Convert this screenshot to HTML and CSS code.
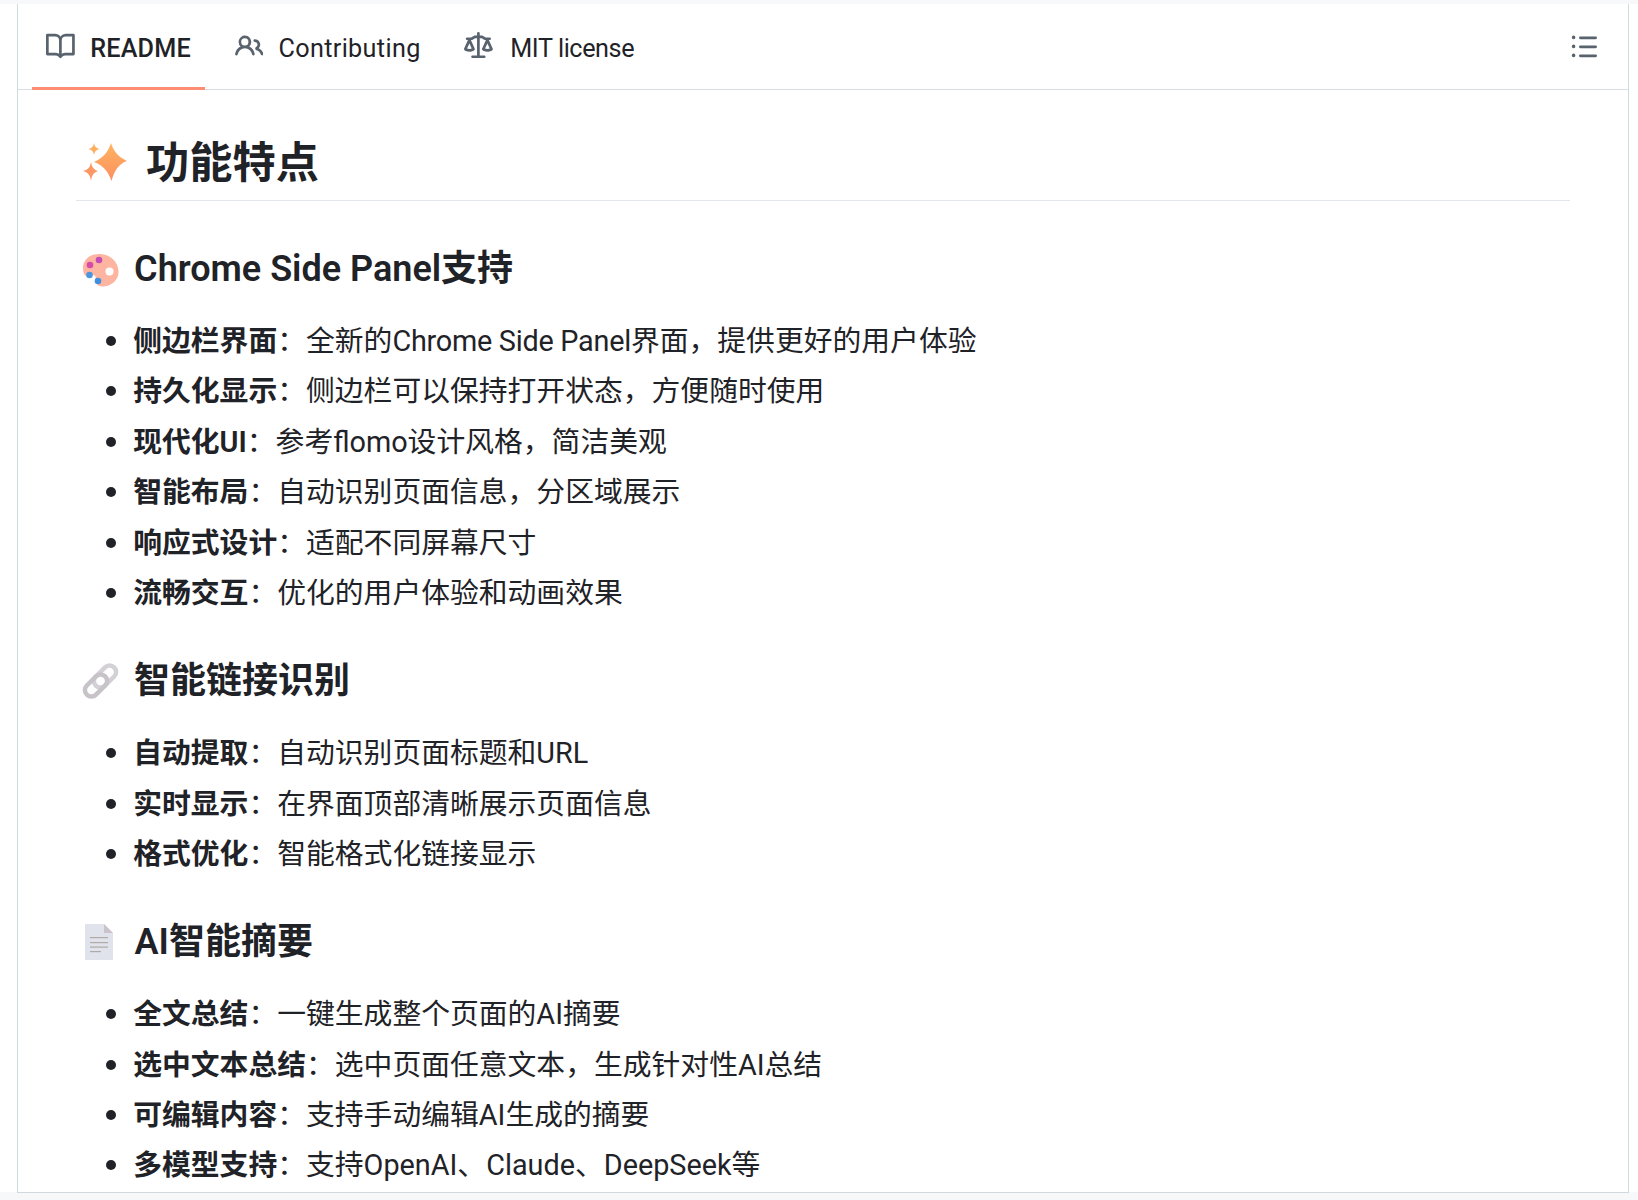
FILE: index.html
```html
<!DOCTYPE html>
<html lang="zh-CN">
<head>
<meta charset="utf-8">
<title>README</title>
<link rel="stylesheet" href="styles.css">
</head>
<body>
<div class="card">
  <header class="tabbar">
    <nav class="tabs">
      <a class="tab active"><svg class="octicon" viewBox="0 0 16 16"><path d="M0 1.75A.75.75 0 0 1 .75 1h4.253c1.227 0 2.317.59 3 1.501A3.743 3.743 0 0 1 11.006 1h4.245a.75.75 0 0 1 .75.75v10.5a.75.75 0 0 1-.75.75h-4.507a2.25 2.25 0 0 0-1.591.659l-.622.621a.75.75 0 0 1-1.06 0l-.622-.621A2.25 2.25 0 0 0 5.258 13H.75a.75.75 0 0 1-.75-.75Zm7.251 10.324.004-5.073-.002-2.253A2.25 2.25 0 0 0 5.003 2.5H1.5v9h3.757a3.75 3.75 0 0 1 1.994.574ZM8.755 4.75l-.004 7.322a3.752 3.752 0 0 1 1.992-.572H14.5v-9h-3.495a2.25 2.25 0 0 0-2.25 2.25Z"/></svg><span>README</span></a>
      <a class="tab"><svg class="octicon" viewBox="0 0 16 16"><path d="M2 5.5a3.5 3.5 0 1 1 5.898 2.549 5.508 5.508 0 0 1 3.034 4.084.75.75 0 1 1-1.482.235 4 4 0 0 0-7.9 0 .75.75 0 0 1-1.482-.236A5.507 5.507 0 0 1 3.102 8.05 3.493 3.493 0 0 1 2 5.5ZM11 4a3.001 3.001 0 0 1 2.22 5.018 5.01 5.01 0 0 1 2.56 3.012.749.749 0 0 1-.885.954.752.752 0 0 1-.549-.514 3.507 3.507 0 0 0-2.522-2.372.75.75 0 0 1-.574-.73v-.352a.75.75 0 0 1 .416-.672A1.5 1.5 0 0 0 11 5.5.75.75 0 0 1 11 4Zm-5.5-.5a2 2 0 1 0-.001 3.999A2 2 0 0 0 5.5 3.5Z"/></svg><span class="wide">Contributing</span></a>
      <a class="tab"><svg class="octicon" viewBox="0 0 16 16"><path d="M8.75.75V2h.985c.304 0 .603.08.867.231l1.29.736c.038.022.08.033.124.033h2.234a.75.75 0 0 1 0 1.5h-.427l2.111 4.692a.75.75 0 0 1-.154.838l-.53-.53.529.531-.001.002-.002.002-.006.006-.006.005-.01.01-.045.04c-.21.176-.441.327-.686.45C14.556 10.78 13.88 11 13 11a4.498 4.498 0 0 1-2.023-.454 3.544 3.544 0 0 1-.686-.45l-.045-.04-.016-.015-.006-.006-.004-.004v-.001a.75.75 0 0 1-.154-.838L12.178 4.5h-.162c-.305 0-.604-.079-.868-.231l-1.29-.736a.245.245 0 0 0-.124-.033H8.75V13h2.5a.75.75 0 0 1 0 1.5h-6.5a.75.75 0 0 1 0-1.5h2.5V3.5h-.984a.245.245 0 0 0-.124.033l-1.289.737c-.265.15-.564.23-.869.23h-.162l2.112 4.692a.75.75 0 0 1-.154.838l-.53-.53.529.531-.001.002-.002.002-.006.006-.016.015-.045.04c-.21.176-.441.327-.686.45C4.556 10.78 3.88 11 3 11a4.498 4.498 0 0 1-2.023-.454 3.544 3.544 0 0 1-.686-.45l-.045-.04-.016-.015-.006-.006-.004-.004v-.001a.75.75 0 0 1-.154-.838L2.178 4.5H1.750a.75.75 0 0 1 0-1.5h2.234a.249.249 0 0 0 .125-.033l1.288-.737c.265-.15.564-.23.869-.23h.984V.75a.75.75 0 0 1 1.5 0Zm2.945 8.477c.285.135.718.273 1.305.273s1.02-.138 1.305-.273L13 6.327Zm-10 0c.285.135.718.273 1.305.273s1.02-.138 1.305-.273L3 6.327Z"/></svg><span class="narrow">MIT license</span></a>
    </nav>
    <svg class="octicon outline" viewBox="0 0 16 16"><path d="M5.75 2.5h8.5a.75.75 0 0 1 0 1.5h-8.5a.75.75 0 0 1 0-1.5Zm0 5h8.5a.75.75 0 0 1 0 1.5h-8.5a.75.75 0 0 1 0-1.5Zm0 5h8.5a.75.75 0 0 1 0 1.5h-8.5a.75.75 0 0 1 0-1.5ZM2 14a1 1 0 1 1 0-2 1 1 0 0 1 0 2Zm1-6a1 1 0 1 1-2 0 1 1 0 0 1 2 0ZM2 4a1 1 0 1 1 0-2 1 1 0 0 1 0 2Z"/></svg>
  </header>
  <article class="markdown">
    <h1>
      <svg class="emoji emoji-sparkles" viewBox="0 0 46 40"><defs><linearGradient id="spark" x1="0" y1="0" x2="0" y2="1"><stop offset="0" stop-color="#fdb45f"/><stop offset="1" stop-color="#fd8f62"/></linearGradient></defs><path fill="url(#spark)" d="M29 1C31 8 36 15 45 19C36 22 32 30 29.500 39C26.500 30 21 23 12 20C22 16 27 8 29 1Z"/><path fill="#fdae5f" d="M12 1C12.700 4.500 14 6 17.500 7C14 8 12.700 9.500 12 13C11.300 9.500 10 8 6.500 7C10 6 11.300 4.500 12 1Z"/><path fill="#fd9763" d="M9 20C9.800 25 11.500 27.500 16 29C11.500 30.500 9.800 33.500 9 39C8.200 33.500 6.500 30.500 1 29C6.500 27.500 8.200 25 9 20Z"/></svg>
      <span>功能特点</span>
    </h1>
    <h2>
      <svg class="emoji emoji-palette" viewBox="0 0 37 35"><path fill="#fdb4a0" d="M19 1C9 0 1 6 1 15C1 19 2 22 4 23C7 24 9 22 11 22C14 22 14 25 14 28C14 32 18 34 22 33.500C30 32.500 36.500 27 36.500 19C36.500 9 29 2 19 1Z"/><circle cx="27.500" cy="18.500" r="4" fill="#fff"/><circle cx="17" cy="7" r="3.300" fill="#c44bb5"/><circle cx="8" cy="12" r="3.300" fill="#d84aa8"/><circle cx="7.500" cy="22" r="3.300" fill="#4b96dc"/><circle cx="16" cy="28" r="3.300" fill="#3f8fe0"/></svg>
      <span>Chrome Side Panel支持</span>
    </h2>
    <ul>
      <li><strong>侧边栏界面</strong>：全新的<span class="tight">Chrome Side Panel</span>界面，提供更好的用户体验</li>
      <li><strong>持久化显示</strong>：侧边栏可以保持打开状态，方便随时使用</li>
      <li><strong>现代化UI</strong>：参考flomo设计风格，简洁美观</li>
      <li><strong>智能布局</strong>：自动识别页面信息，分区域展示</li>
      <li><strong>响应式设计</strong>：适配不同屏幕尺寸</li>
      <li><strong>流畅交互</strong>：优化的用户体验和动画效果</li>
    </ul>
    <h2>
      <svg class="emoji emoji-link" viewBox="0 0 37 36"><g fill="none" stroke-width="4.500"><rect x="16.500" y="0.500" width="13" height="26" rx="6.500" transform="rotate(45 23 13.500)" stroke="#d3d0d6"/><rect x="7.500" y="9.500" width="13" height="26" rx="6.500" transform="rotate(45 14 22.500)" stroke="#c7c3c9"/></g></svg>
      <span>智能链接识别</span>
    </h2>
    <ul>
      <li><strong>自动提取</strong>：自动识别页面标题和URL</li>
      <li><strong>实时显示</strong>：在界面顶部清晰展示页面信息</li>
      <li><strong>格式优化</strong>：智能格式化链接显示</li>
    </ul>
    <h2>
      <svg class="emoji emoji-doc" viewBox="0 0 28 36"><path fill="#e1e3ec" d="M0 0H19L28 9V36H0Z"/><path fill="#cbc3cb" d="M19 0L28 9H19Z"/><g fill="#aeaaa6"><rect x="5" y="13" width="18" height="1.200"/><rect x="5" y="18" width="18" height="1.200"/><rect x="5" y="22.500" width="18" height="1.200"/><rect x="5" y="27" width="11" height="1.200"/></g></svg>
      <span>AI智能摘要</span>
    </h2>
    <ul>
      <li><strong>全文总结</strong>：一键生成整个页面的AI摘要</li>
      <li><strong>选中文本总结</strong>：选中页面任意文本，生成针对性AI总结</li>
      <li><strong>可编辑内容</strong>：支持手动编辑AI生成的摘要</li>
      <li><strong>多模型支持</strong>：支持OpenAI、Claude、DeepSeek等</li>
    </ul>
  </article>
</div>
</body>
</html>
```
FILE: styles.css
```css
html, body {
  margin: 0;
  height: 1200px;
  overflow: hidden;
}
body {
  background: linear-gradient(#f6f8fa 0 4px, #fff 4px 1192px, #f6f8fa 1192px);
  padding-top: 4px;
  box-sizing: border-box;
  font-family: Roboto, "Noto Sans CJK SC", sans-serif;
  color: #1f2328;
}
.card {
  margin-left: 17px;
  width: 1612px;
  height: 1189px;
  box-sizing: border-box;
  border: 1px solid #d1d9e0;
  border-top: 0;
  overflow: hidden;
  background: #fff;
}
.tabbar {
  display: flex;
  align-items: center;
  justify-content: space-between;
  height: 85px;
  padding: 0 29px 0 14px;
  border-bottom: 1px solid #d8dee4;
}
.tabs {
  display: flex;
  gap: 15px;
  height: 100%;
}
.tab {
  position: relative;
  display: flex;
  align-items: center;
  gap: 15px;
  padding: 0 14.4px;
  font-size: 25.2px;
  color: #1f2328;
}
.tab span {
  padding-top: 4px;
}
.wide {
  letter-spacing: 0.35px;
}
.narrow {
  margin-left: 2px;
  letter-spacing: -0.4px;
}
.tight {
  letter-spacing: -0.25px;
}
.tab.active {
  font-weight: 500;
  letter-spacing: 0.2px;
}
.tab.active::after {
  content: "";
  position: absolute;
  left: 0;
  right: 0;
  bottom: -1px;
  height: 3px;
  background: #fd8c73;
}
.octicon {
  width: 28.8px;
  height: 28.8px;
  fill: #59636e;
  flex: none;
}
.markdown {
  padding: 47px 57.6px 0;
}
h1, h2 {
  display: flex;
  align-items: center;
  margin: 0;
  font-weight: 600;
}
h1 {
  font-size: 43.2px;
  line-height: 54px;
  padding-bottom: 9px;
  border-bottom: 1.5px solid #e3e6ea;
}
h2 {
  font-size: 36px;
  line-height: 45px;
  margin-top: 44px;
  margin-bottom: 28px;
}
h1 + h2 {
  margin-top: 46px;
}
.emoji {
  flex: none;
}
.emoji-sparkles {
  width: 46px;
  height: 40px;
  margin: 0 18px 4px 6.500px;
}
.emoji-palette {
  width: 37px;
  height: 35px;
  margin: 2px 15px 0 6.500px;
}
.emoji-link {
  width: 37px;
  height: 36px;
  margin: 0 15px 2px 6.500px;
}
.emoji-doc {
  width: 28px;
  height: 36px;
  margin: 0 21.500px 2px 9.500px;
}
ul {
  margin: 0 0 28.8px;
  padding-left: 57.6px;
  list-style: none;
}
ul:last-child {
  margin-bottom: 0;
}
li {
  position: relative;
  font-size: 28.8px;
  line-height: 43.2px;
  margin-bottom: 7.2px;
}
li::before {
  content: "";
  position: absolute;
  left: -27px;
  top: 16px;
  width: 10px;
  height: 10px;
  border-radius: 50%;
  background: #1f2328;
}
strong {
  font-weight: 600;
}
```
